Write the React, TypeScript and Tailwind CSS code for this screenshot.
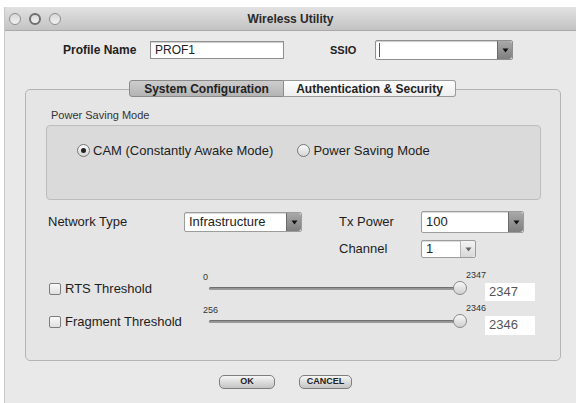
import React from "react";

const F = { fontFamily: '"Liberation Sans", Arial, sans-serif' };

function Arrow({ light }: { light?: boolean }) {
  return (
    <div
      className={
        "flex w-[15px] h-full items-center justify-center rounded-r-[3px] border-l " +
        (light
          ? "bg-gradient-to-b from-[#f4f4f4] to-[#d8d8d8] border-[#b5b5b5]"
          : "bg-gradient-to-b from-[#a9a9a9] to-[#7f7f7f] border-[#6c6c6c]")
      }
    >
      <svg width="7" height="5" viewBox="0 0 7 5">
        <path d="M0.5 0.5 L6.5 0.5 L3.5 4.5 Z" fill={light ? "#666" : "#111"} />
      </svg>
    </div>
  );
}

function Select({ w, h, value, light }: { w: string; h: string; value: string; light?: boolean }) {
  return (
    <div className={`flex ${w} ${h} items-stretch border border-[#9c9c9c] bg-white shadow-[inset_0_1px_1px_rgba(0,0,0,0.15)] rounded-[2px]`}>
      <div className="flex flex-1 items-center pl-[4px] text-[13px] text-[#222]">{value}</div>
      <Arrow light={light} />
    </div>
  );
}

function Slider({ min, max }: { min: string; max: string }) {
  return (
    <div className="relative h-[30px] w-[282px]">
      <span className="absolute left-[0px] top-[0px] text-[9px] text-[#333]">{min}</span>
      <span className="absolute left-[263px] top-[-2px] text-[9px] text-[#333]">{max}</span>
      <div className="absolute left-[6px] top-[16px] h-[3px] w-[252px] rounded-full bg-[#9a9a9a] shadow-[inset_0_1px_1px_rgba(0,0,0,0.3)]" />
      <div className="absolute left-[250px] top-[10px] h-[14px] w-[14px] rounded-full border border-[#8a8a8a] bg-gradient-to-b from-[#f8f8f8] to-[#d0d0d0]" />
    </div>
  );
}

function Check({ label }: { label: string }) {
  return (
    <div className="flex items-center w-[154px]">
      <div className="h-[12px] w-[12px] rounded-[2px] border border-[#7d7d7d] bg-gradient-to-b from-[#fafafa] to-[#e0e0e0]" />
      <span className="ml-[4px] text-[13px] text-[#1d1d1d] whitespace-nowrap">{label}</span>
    </div>
  );
}

function Radio({ on, label }: { on?: boolean; label: string }) {
  return (
    <div className="flex items-center">
      <div className="flex h-[13px] w-[13px] items-center justify-center rounded-full border border-[#777] bg-gradient-to-b from-[#fafafa] to-[#d6d6d6]">
        {on && <div className="h-[5px] w-[5px] rounded-full bg-[#222]" />}
      </div>
      <span className="ml-[3px] text-[13px] text-[#1d1d1d] whitespace-nowrap">{label}</span>
    </div>
  );
}

function Btn({ label, w }: { label: string; w: string }) {
  return (
    <div className={`flex ${w} h-[14px] items-center justify-center rounded-[5px] border border-[#7e7e7e] bg-gradient-to-b from-[#f6f6f6] via-[#dcdcdc] to-[#c4c4c4] text-[9px] font-bold text-[#222]`}>
      {label}
    </div>
  );
}

export default function App() {
  return (
    <div style={F} className="h-[403px] w-[576px] overflow-hidden bg-white pl-[4px] pt-[7px]">
      <div className="flex h-[396px] flex-col border-l border-[#c8c8c8] bg-[#e9e9e9]">
        {/* title bar */}
        <div className="relative flex h-[24px] items-center justify-center border-b border-[#a9a9a9] bg-gradient-to-b from-[#e2e2e2] to-[#c3c3c3]">
          <div className="absolute left-[4px] top-[6px] flex gap-[8px]">
            <div className="h-[12px] w-[12px] rounded-full border border-[#8e8e8e] bg-gradient-to-b from-[#d8d8d8] to-[#f2f2f2]" />
            <div className="h-[12px] w-[12px] rounded-full border-2 border-[#6e6e6e] bg-gradient-to-b from-[#d8d8d8] to-[#f2f2f2]" />
            <div className="h-[12px] w-[12px] rounded-full border border-[#8e8e8e] bg-gradient-to-b from-[#d8d8d8] to-[#f2f2f2]" />
          </div>
          <span className="text-[12px] font-bold text-[#2a2a2a]">Wireless Utility</span>
        </div>

        {/* profile row */}
        <div className="mt-[9px] flex h-[20px] items-center pl-[58px]">
          <span className="w-[87px] text-[12px] font-bold text-[#222]">Profile Name</span>
          <div className="flex h-[18px] w-[134px] items-center border border-[#8f8f8f] bg-white pl-[4px] text-[12px] text-[#222] shadow-[inset_0_1px_1px_rgba(0,0,0,0.2)]">
            PROF1
          </div>
          <span className="ml-[46px] w-[45px] text-[11px] font-bold text-[#222]">SSIO</span>
          <div className="flex h-[20px] w-[138px] items-stretch border border-[#8f8f8f] bg-white shadow-[inset_0_1px_1px_rgba(0,0,0,0.2)] rounded-[2px]">
            <div className="ml-[3px] w-[1px] my-[2px] bg-[#555]" />
            <div className="flex-1" />
            <Arrow />
          </div>
        </div>

        {/* tabs */}
        <div className="relative z-10 mt-[20px] flex h-[17px] pl-[124px]">
          <div className="flex w-[155px] items-center justify-center rounded-l-[3px] border border-[#8a8a8a] bg-gradient-to-b from-[#cdcdcd] to-[#b4b4b4] text-[12px] font-bold text-[#222]">
            System Configuration
          </div>
          <div className="flex w-[172px] items-center justify-center rounded-r-[3px] border border-l-0 border-[#9a9a9a] bg-gradient-to-b from-[#fdfdfd] to-[#eeeeee] text-[12px] font-bold text-[#222]">
            Authentication &amp; Security
          </div>
        </div>

        {/* panel */}
        <div className="ml-[20px] mr-[15px] -mt-[8px] h-[272px] rounded-[5px] border border-[#b4b4b4] bg-[#e5e5e5] pl-[20px] pt-[19px]">
          <div className="ml-[5px] text-[11px] leading-[12px] text-[#333]">Power Saving Mode</div>
          <div className="mt-[4px] h-[75px] w-[495px] rounded-[4px] border border-[#bdbdbd] bg-[#dadada] pl-[30px] pt-[15px]">
            <div className="flex items-center">
              <Radio on label="CAM (Constantly Awake Mode)" />
              <div className="ml-[24px]">
                <Radio label="Power Saving Mode" />
              </div>
            </div>
          </div>

          {/* network row */}
          <div className="mt-[11px] flex h-[22px] items-center pl-[2px]">
            <span className="w-[136px] text-[13px] text-[#1d1d1d]">Network Type</span>
            <Select w="w-[118px]" h="h-[20px]" value="Infrastructure" />
            <span className="ml-[37px] w-[82px] text-[13px] text-[#1d1d1d]">Tx Power</span>
            <Select w="w-[103px]" h="h-[22px]" value="100" />
          </div>
          <div className="mt-[7px] flex h-[18px] items-center pl-[293px]">
            <span className="w-[82px] text-[13px] text-[#1d1d1d]">Channel</span>
            <Select w="w-[55px]" h="h-[18px]" value="1" light />
          </div>

          {/* RTS */}
          <div className="mt-[13px] flex h-[30px] items-center pl-[3px]">
            <div className="mt-[6px]"><Check label="RTS Threshold" /></div>
            <Slider min="0" max="2347" />
            <div className="mt-[12px] flex h-[18px] w-[50px] items-center bg-white pl-[4px] text-[13px] text-[#555]">2347</div>
          </div>
          {/* Fragment */}
          <div className="mt-[3px] flex h-[30px] items-center pl-[3px]">
            <div className="mt-[6px]"><Check label="Fragment Threshold" /></div>
            <Slider min="256" max="2346" />
            <div className="mt-[12px] flex h-[19px] w-[50px] items-center bg-white pl-[4px] text-[13px] text-[#555]">2346</div>
          </div>
        </div>

        {/* buttons */}
        <div className="mt-[14px] flex justify-center gap-[24px] pr-[10px]">
          <Btn label="OK" w="w-[56px]" />
          <Btn label="CANCEL" w="w-[53px]" />
        </div>
      </div>
    </div>
  );
}
